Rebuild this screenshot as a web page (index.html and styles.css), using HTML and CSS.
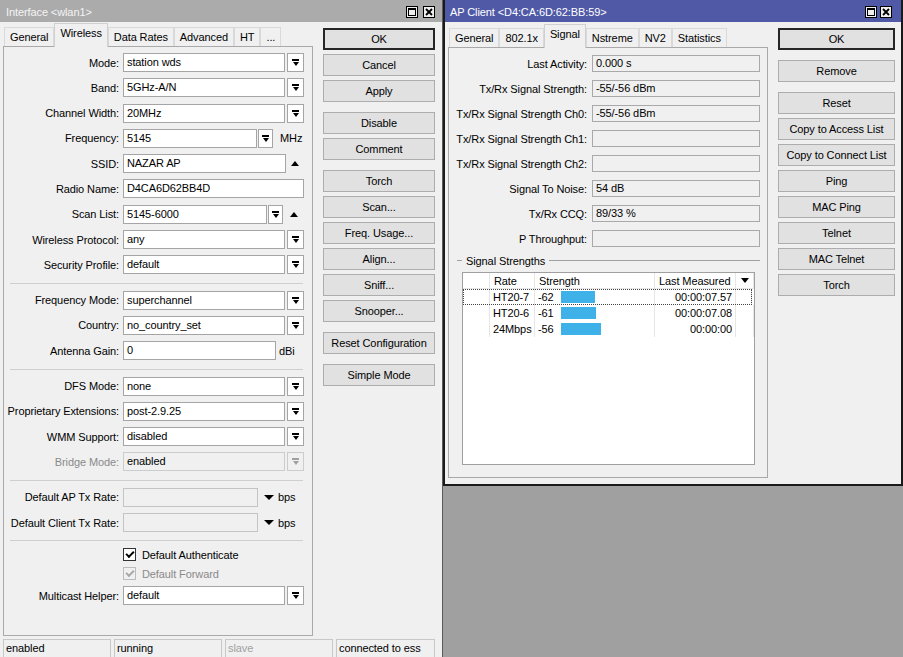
FILE: index.html
```html
<!DOCTYPE html>
<html lang="en">
<head>
    <meta charset="UTF-8">
    <title>Interface &lt;wlan1&gt;</title>
    <link rel="stylesheet" href="styles.css">
</head>
<body>
<div class="desktop">

    <!-- Interface window -->
    <div class="window win-iface">
        <div class="titlebar">
            <span>Interface &lt;wlan1&gt;</span>
            <div class="tb-btns">
                <span class="tb-btn"><svg width="8" height="8" viewBox="0 0 8 8"><rect x="0.5" y="0.5" width="7" height="7" fill="none" stroke="#000"/><rect x="0" y="0" width="8" height="2" fill="#000"/></svg></span>
                <span class="tb-btn"><svg width="8" height="8" viewBox="0 0 8 8"><path d="M1 1L7 7M7 1L1 7" stroke="#000" stroke-width="1.8"/></svg></span>
            </div>
        </div>
        <div class="win-body">
            <div class="tabbox tabbox-iface">
                <div class="tabs">
                    <span class="tab">General</span>
                    <span class="tab active">Wireless</span>
                    <span class="tab">Data Rates</span>
                    <span class="tab">Advanced</span>
                    <span class="tab">HT</span>
                    <span class="tab">...</span>
                </div>
                <div class="panel form">
                    <div class="row"><label class="lbl">Mode:</label><span class="field">station wds</span><span class="dd"></span></div>
                    <div class="row"><label class="lbl">Band:</label><span class="field">5GHz-A/N</span><span class="dd"></span></div>
                    <div class="row"><label class="lbl">Channel Width:</label><span class="field">20MHz</span><span class="dd"></span></div>
                    <div class="row"><label class="lbl">Frequency:</label><span class="field w-freq">5145</span><span class="dd dd-sm"></span><span class="unit unit-freq">MHz</span></div>
                    <div class="row"><label class="lbl">SSID:</label><span class="field w-ssid">NAZAR AP</span><span class="tri-box"><span class="tri-up"></span></span></div>
                    <div class="row"><label class="lbl">Radio Name:</label><span class="field">D4CA6D62BB4D</span></div>
                    <div class="row"><label class="lbl">Scan List:</label><span class="field w-scan">5145-6000</span><span class="dd dd-sm"></span><span class="tri-box"><span class="tri-up"></span></span></div>
                    <div class="row"><label class="lbl">Wireless Protocol:</label><span class="field">any</span><span class="dd"></span></div>
                    <div class="row"><label class="lbl">Security Profile:</label><span class="field">default</span><span class="dd"></span></div>
                    <div class="sep"></div>
                    <div class="row"><label class="lbl">Frequency Mode:</label><span class="field">superchannel</span><span class="dd"></span></div>
                    <div class="row"><label class="lbl">Country:</label><span class="field">no_country_set</span><span class="dd"></span></div>
                    <div class="row"><label class="lbl">Antenna Gain:</label><span class="field w-gain">0</span><span class="unit unit-gain">dBi</span></div>
                    <div class="sep"></div>
                    <div class="row"><label class="lbl">DFS Mode:</label><span class="field">none</span><span class="dd"></span></div>
                    <div class="row"><label class="lbl">Proprietary Extensions:</label><span class="field">post-2.9.25</span><span class="dd"></span></div>
                    <div class="row"><label class="lbl">WMM Support:</label><span class="field">disabled</span><span class="dd"></span></div>
                    <div class="row disabled"><label class="lbl">Bridge Mode:</label><span class="field">enabled</span><span class="dd"></span></div>
                    <div class="sep"></div>
                    <div class="row"><label class="lbl">Default AP Tx Rate:</label><span class="field field-off w-rate"></span><span class="tri-box tri-box-rate"><span class="tri-down"></span></span><span class="unit unit-rate">bps</span></div>
                    <div class="row"><label class="lbl">Default Client Tx Rate:</label><span class="field field-off w-rate"></span><span class="tri-box tri-box-rate"><span class="tri-down"></span></span><span class="unit unit-rate">bps</span></div>
                    <div class="sep"></div>
                    <div class="row row-cb"><span class="lbl"></span><span class="cb checked"></span><span>Default Authenticate</span></div>
                    <div class="row row-cb disabled"><span class="lbl"></span><span class="cb checked"></span><span>Default Forward</span></div>
                    <div class="row"><label class="lbl">Multicast Helper:</label><span class="field">default</span><span class="dd"></span></div>
                </div>
            </div>
            <div class="btn-col btn-col-iface">
                <span class="btn btn-default">OK</span>
                <span class="btn">Cancel</span>
                <span class="btn group-end">Apply</span>
                <span class="btn">Disable</span>
                <span class="btn group-end">Comment</span>
                <span class="btn">Torch</span>
                <span class="btn">Scan...</span>
                <span class="btn">Freq. Usage...</span>
                <span class="btn">Align...</span>
                <span class="btn">Sniff...</span>
                <span class="btn group-end">Snooper...</span>
                <span class="btn group-end">Reset Configuration</span>
                <span class="btn">Simple Mode</span>
            </div>
        </div>
        <div class="statusbar">
            <span class="cell">enabled</span>
            <span class="cell">running</span>
            <span class="cell cell-off">slave</span>
            <span class="cell cell-last">connected to ess</span>
        </div>
    </div>

    <!-- AP Client window -->
    <div class="window win-client">
        <div class="titlebar">
            <span>AP Client &lt;D4:CA:6D:62:BB:59&gt;</span>
            <div class="tb-btns">
                <span class="tb-btn"><svg width="8" height="8" viewBox="0 0 8 8"><rect x="0.5" y="0.5" width="7" height="7" fill="none" stroke="#000"/><rect x="0" y="0" width="8" height="2" fill="#000"/></svg></span>
                <span class="tb-btn"><svg width="8" height="8" viewBox="0 0 8 8"><path d="M1 1L7 7M7 1L1 7" stroke="#000" stroke-width="1.8"/></svg></span>
            </div>
        </div>
        <div class="win-body">
            <div class="tabbox tabbox-client">
                <div class="tabs">
                    <span class="tab">General</span>
                    <span class="tab">802.1x</span>
                    <span class="tab active">Signal</span>
                    <span class="tab">Nstreme</span>
                    <span class="tab">NV2</span>
                    <span class="tab">Statistics</span>
                </div>
                <div class="panel info">
                    <div class="irow"><span class="ilbl">Last Activity:</span><span class="ival">0.000 s</span></div>
                    <div class="irow"><span class="ilbl">Tx/Rx Signal Strength:</span><span class="ival">-55/-56 dBm</span></div>
                    <div class="irow"><span class="ilbl">Tx/Rx Signal Strength Ch0:</span><span class="ival">-55/-56 dBm</span></div>
                    <div class="irow"><span class="ilbl">Tx/Rx Signal Strength Ch1:</span><span class="ival"></span></div>
                    <div class="irow"><span class="ilbl">Tx/Rx Signal Strength Ch2:</span><span class="ival"></span></div>
                    <div class="irow"><span class="ilbl">Signal To Noise:</span><span class="ival">54 dB</span></div>
                    <div class="irow"><span class="ilbl">Tx/Rx CCQ:</span><span class="ival">89/33 %</span></div>
                    <div class="irow"><span class="ilbl">P Throughput:</span><span class="ival"></span></div>

                    <div class="group-head"><span>Signal Strengths</span></div>
                    <div class="grid">
                        <div class="grid-row grid-header">
                            <span></span>
                            <span>Rate</span>
                            <span>Strength</span>
                            <span>Last Measured</span>
                            <span class="col-menu"><span class="tri-down tri-sm"></span></span>
                        </div>
                        <div class="grid-row focused">
                            <span></span>
                            <span>HT20-7</span>
                            <span class="strength"><span class="sval">-62</span><span class="bar" style="width: 34px"></span></span>
                            <span class="num">00:00:07.57</span>
                            <span></span>
                        </div>
                        <div class="grid-row">
                            <span></span>
                            <span>HT20-6</span>
                            <span class="strength"><span class="sval">-61</span><span class="bar" style="width: 35px"></span></span>
                            <span class="num">00:00:07.08</span>
                            <span></span>
                        </div>
                        <div class="grid-row">
                            <span></span>
                            <span>24Mbps</span>
                            <span class="strength"><span class="sval">-56</span><span class="bar" style="width: 40px"></span></span>
                            <span class="num">00:00:00</span>
                            <span></span>
                        </div>
                    </div>
                </div>
            </div>
            <div class="btn-col btn-col-client">
                <span class="btn btn-default group-end">OK</span>
                <span class="btn group-end">Remove</span>
                <span class="btn">Reset</span>
                <span class="btn">Copy to Access List</span>
                <span class="btn">Copy to Connect List</span>
                <span class="btn">Ping</span>
                <span class="btn">MAC Ping</span>
                <span class="btn">Telnet</span>
                <span class="btn">MAC Telnet</span>
                <span class="btn">Torch</span>
            </div>
        </div>
    </div>

</div>
</body>
</html>
```

FILE: styles.css
```css
* {
    box-sizing: border-box;
}

body {
    margin: 0;
    font-family: "Liberation Sans", Arial, sans-serif;
    font-size: 11px;
    letter-spacing: -0.1px;
    color: #000;
    background-color: #a0a0a0;
}

.desktop {
    position: relative;
    width: 903px;
    height: 657px;
    overflow: hidden;
    background-color: #a0a0a0;
}

/* windows */

.window {
    position: absolute;
    top: 0;
    display: flex;
    flex-direction: column;
    background-color: #f0f0f0;
}

.win-iface {
    left: 0;
    width: 443px;
    height: 657px;
    border-right: 1px solid #5a5a5a;
}

.win-client {
    left: 443px;
    width: 460px;
    height: 486px;
    border: 2px solid #1a1a1a;
    border-top: 0;
}

.titlebar {
    height: 22px;
    flex: none;
    display: flex;
    align-items: center;
    justify-content: space-between;
    padding: 2px 7px 0 6px;
    color: #fff;
}

.win-iface .titlebar {
    background-color: #ababab;
    color: #f4f4f4;
}

.win-client .titlebar {
    background-color: #5059a6;
    padding-left: 5px;
    padding-right: 9px;
}

.tb-btns {
    display: flex;
    gap: 5px;
}

.win-client .tb-btns {
    gap: 3px;
}

.tb-btn {
    width: 12px;
    height: 12px;
    border: 1px solid #000;
    background-color: #f0f0f0;
    display: flex;
    align-items: center;
    justify-content: center;
}

.win-body {
    flex: 1;
    display: flex;
    min-height: 0;
}

/* tabs */

.tabbox {
    display: flex;
    flex-direction: column;
}

.tabbox-iface {
    width: 310px;
    margin-left: 3px;
}

.tabbox-client {
    width: 320px;
    margin-left: 3px;
    margin-bottom: 6px;
}

.tabs {
    height: 24px;
    flex: none;
    display: flex;
    align-items: flex-end;
    padding-left: 1px;
}

.tabbox-client .tabs {
    height: 25px;
}

.tab {
    height: 19px;
    padding: 0 5px;
    line-height: 18px;
    border: 1px solid #d9d9d9;
    border-bottom: 0;
    background-color: #f0f0f0;
}

.tab.active {
    position: relative;
    z-index: 1;
    height: 24px;
    margin-bottom: -1px;
    line-height: 18px;
    background-color: #f0f0f0;
    border-color: #d0d0d0;
}

.panel {
    flex: 1;
    border: 1px solid #a9a9a9;
    background-color: #f0f0f0;
    display: flex;
    flex-direction: column;
}

/* interface form */

.form {
    padding: 6px 8px 0 0;
}

.row {
    height: 19px;
    flex: none;
    display: flex;
    align-items: center;
    margin-bottom: 6.3px;
}

.lbl {
    width: 115px;
    flex: none;
    margin-right: 4px;
    text-align: right;
    white-space: nowrap;
}

.field {
    flex: 1;
    height: 19px;
    padding: 0 3px;
    line-height: 17px;
    border: 1px solid #a5a5a5;
    background-color: #fff;
    white-space: nowrap;
}

.w-freq {
    flex: 0 0 134px;
}

.w-ssid {
    flex: 0 0 163px;
}

.w-scan {
    flex: 0 0 144px;
}

.w-gain {
    flex: 0 0 153px;
}

.w-rate {
    flex: 0 0 135px;
}

.field-off {
    background-color: #f0f0f0;
    border-color: #c4c4c4;
}

.dd {
    width: 17px;
    height: 19px;
    flex: none;
    margin-left: 2px;
    border: 1px solid #a5a5a5;
    background-color: #fff;
    display: flex;
    flex-direction: column;
    align-items: center;
    justify-content: center;
    gap: 1px;
}

.dd::before {
    content: "";
    width: 7px;
    height: 2px;
    background-color: #000;
}

.dd::after {
    content: "";
    border-top: 4px solid #000;
    border-left: 3.5px solid transparent;
    border-right: 3.5px solid transparent;
}

.dd-sm {
    width: 15px;
    margin-left: 1px;
}

.unit {
    margin-left: 5px;
}

.unit-freq {
    margin-left: 7px;
}

.unit-gain {
    margin-left: 3px;
}

.unit-rate {
    margin-left: 2px;
}

.tri-box {
    width: 22px;
    display: flex;
    justify-content: center;
}

.tri-box-rate {
    width: 14px;
    margin-left: 4px;
}

.tri-up {
    border-bottom: 5px solid #000;
    border-left: 4.5px solid transparent;
    border-right: 4.5px solid transparent;
}

.tri-down {
    border-top: 5px solid #000;
    border-left: 5px solid transparent;
    border-right: 5px solid transparent;
}

.tri-sm {
    border-left-width: 4px;
    border-right-width: 4px;
}

.disabled {
    color: #8a8a8a;
}

.disabled .field {
    color: #000;
    background-color: #f0f0f0;
    border-color: #cccccc;
}

.disabled .dd {
    background-color: #f0f0f0;
    border-color: #cccccc;
}

.disabled .dd::before {
    background-color: #a0a0a0;
}

.disabled .dd::after {
    border-top-color: #a0a0a0;
}

.sep {
    height: 1px;
    flex: none;
    margin: 2px 1px 7px 6px;
    background-color: #cfcfcf;
}

.row-cb {
    height: 13px;
    margin-bottom: 6px;
}

.cb {
    width: 13px;
    height: 13px;
    flex: none;
    margin-right: 6px;
    border: 1px solid #333;
    background-color: #fff;
    display: flex;
    align-items: center;
    justify-content: center;
}

.cb.checked::after {
    content: "";
    width: 6px;
    height: 3px;
    margin-top: -2px;
    border-left: 2px solid #000;
    border-bottom: 2px solid #000;
    transform: rotate(-45deg);
}

.row-cb.disabled .cb {
    border-color: #bcbcbc;
    background-color: #f0f0f0;
}

.row-cb.disabled .cb::after {
    border-color: #a8a8a8;
}

/* buttons */

.btn-col {
    display: flex;
    flex-direction: column;
}

.btn-col-iface {
    width: 112px;
    margin-left: 10px;
    padding-top: 5.5px;
}

.btn-col-client {
    width: 117px;
    margin-left: 10px;
    padding-top: 5.5px;
}

.btn {
    height: 22px;
    flex: none;
    margin-bottom: 4px;
    border: 1px solid #adadad;
    background-color: #e1e1e1;
    display: flex;
    align-items: center;
    justify-content: center;
    white-space: nowrap;
}

.btn-default {
    border: 2px solid #262626;
}

.btn.group-end {
    margin-bottom: 10px;
}

/* status bar */

.statusbar {
    height: 18px;
    flex: none;
    display: flex;
    gap: 3px;
    margin-top: 3px;
    padding-left: 3px;
}

.cell {
    width: 108px;
    padding: 2px 0 0 2px;
    border: 1px solid #c8c8c8;
    border-bottom: 0;
}

.cell-off {
    color: #a0a0a0;
}

.cell-last {
    width: 99px;
}

/* ap client info */

.info {
    padding: 7px 7px 0 0;
}

.irow {
    height: 17px;
    flex: none;
    display: flex;
    align-items: center;
    margin-bottom: 8px;
}

.ilbl {
    width: 138px;
    flex: none;
    margin-right: 5px;
    text-align: right;
    white-space: nowrap;
}

.ival {
    flex: 1;
    height: 17px;
    padding: 0 3px;
    line-height: 15px;
    border: 1px solid #a9a9a9;
    background-color: #f0f0f0;
}

.group-head {
    height: 13px;
    flex: none;
    display: flex;
    align-items: center;
    gap: 4px;
    margin: -1px 0 5px 8px;
}

.group-head::before {
    content: "";
    width: 5px;
    height: 1px;
    background-color: #a0a0a0;
}

.group-head::after {
    content: "";
    flex: 1;
    height: 1px;
    background-color: #a0a0a0;
}

.grid {
    height: 193px;
    flex: none;
    margin: 0 5px 0 13px;
    border: 1px solid #a0a0a0;
    background-color: #fff;
}

.grid-row {
    height: 16px;
    display: grid;
    grid-template-columns: 27px 45px 120px 81px 1fr;
    align-items: stretch;
}

.grid-row > span {
    display: flex;
    align-items: center;
    padding-left: 3px;
    border-right: 1px solid #e6e6e6;
    white-space: nowrap;
}

.grid-header {
    border-bottom: 1px solid #e6e6e6;
}

.grid-header > span {
    padding-left: 4px;
}

.focused {
    outline: 1px dotted #444;
    outline-offset: -1px;
    margin-right: 2px;
}

.num {
    justify-content: flex-end;
    padding-right: 3px;
}

.col-menu {
    justify-content: center;
    padding-left: 0 !important;
}

.sval {
    width: 23px;
    flex: none;
}

.bar {
    height: 12px;
    background-color: #3eb1e8;
}
```
